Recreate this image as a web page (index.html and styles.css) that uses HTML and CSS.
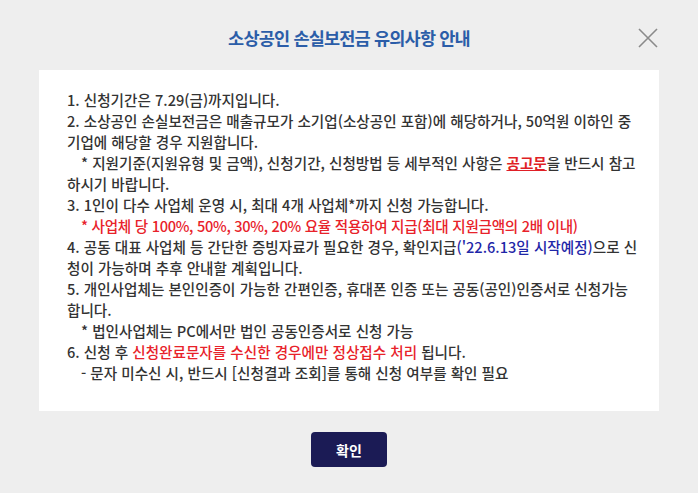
FILE: index.html
```html
<!DOCTYPE html>
<html lang="ko">
<head>
<meta charset="utf-8">
<link rel="stylesheet" href="styles.css">
</head>
<body>
<div class="modal">
  <div class="head">
    <h1 class="title">소상공인 손실보전금 유의사항 안내</h1>
    <button class="close" aria-label="닫기">
      <svg width="20" height="20" viewBox="0 0 20 20"><path d="M1 1L19 19M19 1L1 19" stroke="#8a8a8a" stroke-width="1.6" fill="none"/></svg>
    </button>
  </div>
  <div class="box">
    <p>1. 신청기간은 7.29(금)까지입니다.</p>
    <p>2. 소상공인 손실보전금은 매출규모가 소기업(소상공인 포함)에 해당하거나, 50억원 이하인 중<br>기업에 해당할 경우 지원합니다.</p>
    <p><span class="ind"></span>* 지원기준(지원유형 및 금액), 신청기간, 신청방법 등 세부적인 사항은 <a class="link">공고문</a>을 반드시 참고<br>하시기 바랍니다.</p>
    <p>3. 1인이 다수 사업체 운영 시, 최대 4개 사업체*까지 신청 가능합니다.</p>
    <p class="red"><span class="ind"></span>* 사업체 당 100%, 50%, 30%, 20% 요율 적용하여 지급(최대 지원금액의 2배 이내)</p>
    <p>4. 공동 대표 사업체 등 간단한 증빙자료가 필요한 경우, 확인지급<span class="blue">('22.6.13일 시작예정)</span>으로 신<br>청이 가능하며 추후 안내할 계획입니다.</p>
    <p>5. 개인사업체는 본인인증이 가능한 간편인증, 휴대폰 인증 또는 공동(공인)인증서로 신청가능<br>합니다.</p>
    <p><span class="ind"></span>* 법인사업체는 PC에서만 법인 공동인증서로 신청 가능</p>
    <p>6. 신청 후 <span class="redt">신청완료문자를 수신한 경우에만 정상접수 처리</span> 됩니다.</p>
    <p><span class="ind"></span>- 문자 미수신 시, 반드시 [신청결과 조회]를 통해 신청 여부를 확인 필요</p>
  </div>
  <div class="foot">
    <button class="ok">확인</button>
  </div>
</div>
</body>
</html>
```
FILE: styles.css
```css
html, body {
  margin: 0;
  padding: 0;
  background: #eeeeee;
}
body {
  font-family: "Noto Sans CJK KR", "Noto Sans", sans-serif;
  width: 698px;
  height: 493px;
  overflow: hidden;
}
.modal {
  padding: 0 39px;
}
.head {
  position: relative;
  height: 70px;
  display: flex;
  align-items: center;
  justify-content: center;
}
.title {
  margin: 0;
  font-size: 17.5px;
  font-weight: 700;
  color: #2b5da8;
  letter-spacing: -0.8px;
  padding-top: 5px;
}
.close {
  position: absolute;
  right: 1px;
  top: 28px;
  border: 0;
  background: transparent;
  padding: 0;
  width: 20px;
  height: 20px;
  cursor: pointer;
}
.close svg { display: block; }
.box {
  background: #ffffff;
  padding: 19px 20px 25px 28px;
  height: 297px;
  box-sizing: content-box;
}
.box p {
  margin: 0;
  font-size: 14.6px;
  line-height: 21px;
  font-weight: 500;
  color: #333333;
  letter-spacing: 0;
  white-space: nowrap;
}
.ind {
  display: inline-block;
  width: 14px;
}
.link {
  color: #e01f26;
  text-decoration: underline;
  font-weight: 700;
}
.box p.red {
  color: #e8222a;
  letter-spacing: -0.3px;
}
.redt {
  color: #e8222a;
}
.blue {
  color: #1f27a8;
}
.foot {
  display: flex;
  justify-content: center;
  padding-top: 21px;
}
.ok {
  width: 76px;
  height: 35px;
  border: 0;
  border-radius: 4px;
  background: #1b1b55;
  color: #ffffff;
  font-family: "Noto Sans CJK KR", sans-serif;
  font-size: 14px;
  font-weight: 700;
}
```
